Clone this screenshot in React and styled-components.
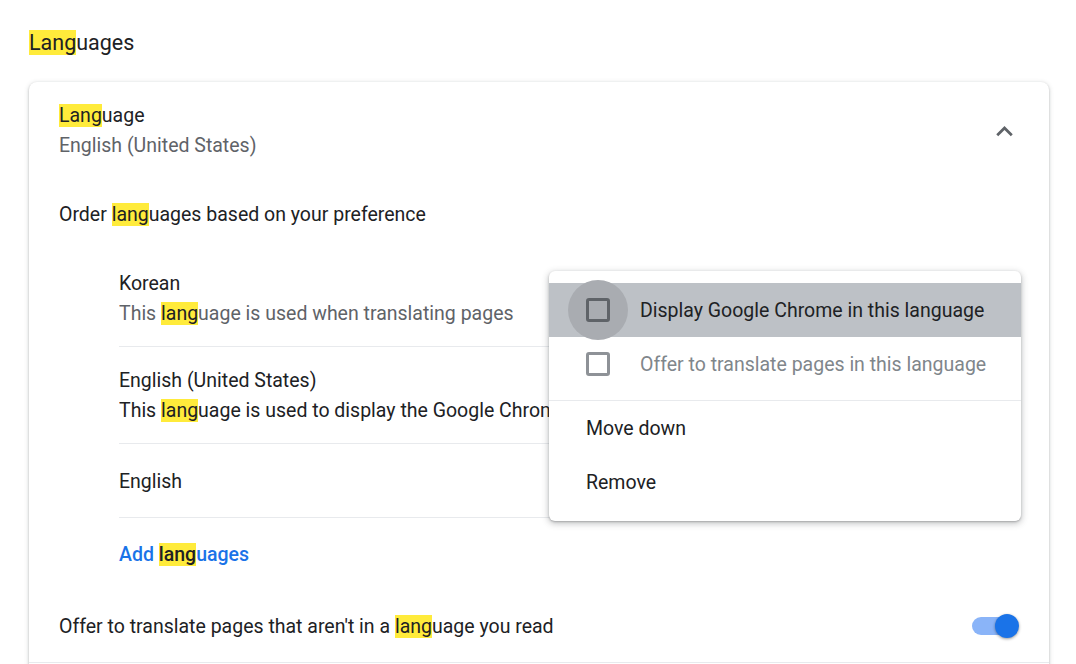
import React from "react";
import styled, { createGlobalStyle } from "styled-components";

const Global = createGlobalStyle`
  html, body { margin: 0; padding: 0; background: #fff; }
  body {
    font-family: Roboto, "Noto Sans", "Liberation Sans", sans-serif;
    color: #202124;
    font-size: 19.5px;
    overflow: hidden;
  }
`;

const Page = styled.div`
  padding: 28px 27px 0 29px;
`;

const Title = styled.h2`
  margin: 0 0 24px;
  font-size: 21.5px;
  font-weight: 400;
  line-height: 30px;
  color: #202124;
`;

const Hl = styled.span`
  background: #ffeb3b;
  color: #202124;
`;

const Card = styled.div`
  position: relative;
  width: 1020px;
  border-radius: 8px;
  background: #fff;
  box-shadow: 0 1px 2px rgba(60, 64, 67, 0.3), 0 1px 4px 1px rgba(60, 64, 67, 0.15);
  min-height: 700px;
`;

const Header = styled.div`
  display: flex;
  align-items: center;
  justify-content: space-between;
  padding: 19px 18px 17px 30px;
`;

const TextBlock = styled.div`
  display: flex;
  flex-direction: column;
  line-height: 30px;
`;

const Secondary = styled.div`
  color: ${(p) => (p.$dark ? "#202124" : "#5f6368")};
  white-space: nowrap;
`;

const IconBtn = styled.div`
  width: 54px;
  height: 54px;
  display: flex;
  align-items: center;
  justify-content: center;
  color: #5f6368;
`;

const Label = styled.div`
  padding: 22px 30px 20px;
  line-height: 30px;
`;

const List = styled.div`
  margin: 0 30px 0 90px;
`;

const Item = styled.div`
  display: flex;
  align-items: center;
  box-sizing: border-box;
  min-height: ${(p) => (p.$single ? "74px" : "auto")};
  padding: ${(p) => (p.$single ? "2px 0 0" : "19px 0 17px")};
  border-bottom: 1px solid #e8eaed;
  line-height: 30px;
  overflow: hidden;
`;

const AddRow = styled.div`
  height: 72px;
  box-sizing: border-box;
  padding-top: 0;
  display: flex;
  align-items: center;
  color: #1a73e8;
  font-weight: 500;
`;

const ToggleRow = styled.div`
  height: 72px;
  box-sizing: border-box;
  display: flex;
  align-items: center;
  justify-content: space-between;
  padding: 0 30px;
`;

const NextRow = styled.div`
  border-top: 1px solid #e8eaed;
  height: 72px;
`;

const Toggle = styled.div`
  position: relative;
  width: 47px;
  height: 24px;
`;

const Track = styled.div`
  position: absolute;
  left: 0;
  top: 3px;
  width: 39px;
  height: 18px;
  border-radius: 9px;
  background: #8ab4f8;
`;

const Knob = styled.div`
  position: absolute;
  right: 0;
  top: 0;
  width: 24px;
  height: 24px;
  border-radius: 50%;
  background: #1a73e8;
  box-shadow: 0 1px 3px rgba(0, 0, 0, 0.4);
`;

const Menu = styled.div`
  position: absolute;
  left: 520px;
  top: 189px;
  width: 472px;
  padding: 12px 0;
  background: #fff;
  border-radius: 6px;
  box-shadow: 0 2px 6px 1px rgba(60, 64, 67, 0.28), 0 1px 2px rgba(60, 64, 67, 0.3);
  z-index: 2;
`;

const MenuItem = styled.div`
  height: 54px;
  display: flex;
  align-items: center;
  padding-left: 37px;
  background: ${(p) => (p.$active ? "#bdc1c6" : "transparent")};
  color: ${(p) => (p.$muted ? "#80868b" : "#202124")};
  white-space: nowrap;
`;

const CheckWrap = styled.div`
  position: relative;
  width: 24px;
  height: 24px;
  margin-right: 30px;
  flex: none;
`;

const Ripple = styled.div`
  position: absolute;
  left: -18px;
  top: -18px;
  width: 60px;
  height: 60px;
  border-radius: 50%;
  background: #a9acb1;
`;

const Box = styled.div`
  position: absolute;
  inset: 0;
  box-sizing: border-box;
  border: 3px solid ${(p) => (p.$dark ? "#5f6368" : "#8e9297")};
  border-radius: 3px;
`;

const Divider = styled.div`
  height: 1px;
  background: #e8eaed;
  margin: 9px 0 0;
`;

const Chevron = () => (
  <svg width="33" height="33" viewBox="0 0 24 24" fill="currentColor">
    <path d="M12 8l-6 6 1.41 1.41L12 10.83l4.59 4.58L18 14z" />
  </svg>
);

const Checkbox = ({ ripple }) => (
  <CheckWrap>
    {ripple && <Ripple />}
    <Box $dark={ripple} />
  </CheckWrap>
);

export default function App() {
  return (
    <>
      <Global />
      <Page>
        <Title>
          <Hl>Lang</Hl>uages
        </Title>
        <Card>
          <Header>
            <TextBlock>
              <div>
                <Hl>Lang</Hl>uage
              </div>
              <Secondary>English (United States)</Secondary>
            </TextBlock>
            <IconBtn>
              <Chevron />
            </IconBtn>
          </Header>
          <Label>
            Order <Hl>lang</Hl>uages based on your preference
          </Label>
          <List>
            <Item>
              <TextBlock>
                <div>Korean</div>
                <Secondary>
                  This <Hl>lang</Hl>uage is used when translating pages
                </Secondary>
              </TextBlock>
            </Item>
            <Item>
              <TextBlock>
                <div>English (United States)</div>
                <Secondary $dark>
                  This <Hl>lang</Hl>uage is used to display the Google Chrome UI
                </Secondary>
              </TextBlock>
            </Item>
            <Item $single>English</Item>
            <AddRow>
              <span>
                Add <Hl>lang</Hl>uages
              </span>
            </AddRow>
          </List>
          <ToggleRow>
            <span>
              Offer to translate pages that aren't in a <Hl>lang</Hl>uage you read
            </span>
            <Toggle>
              <Track />
              <Knob />
            </Toggle>
          </ToggleRow>
          <NextRow />
          <Menu>
            <MenuItem $active>
              <Checkbox ripple />
              Display Google Chrome in this language
            </MenuItem>
            <MenuItem $muted>
              <Checkbox />
              Offer to translate pages in this language
            </MenuItem>
            <Divider />
            <MenuItem>Move down</MenuItem>
            <MenuItem>Remove</MenuItem>
          </Menu>
        </Card>
      </Page>
    </>
  );
}
